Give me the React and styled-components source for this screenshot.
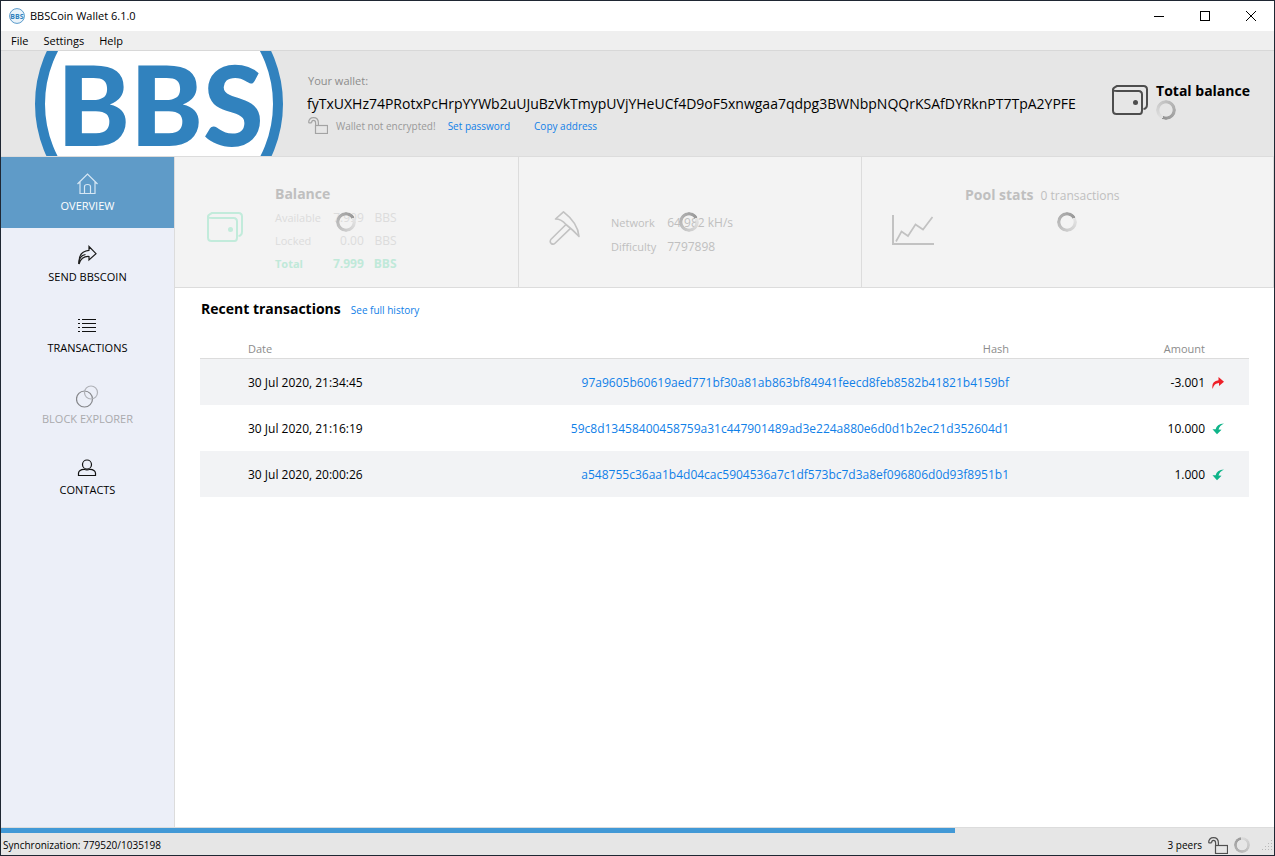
import React from "react";
import styled, { createGlobalStyle } from "styled-components";

const GlobalStyle = createGlobalStyle`
  * { box-sizing: border-box; }
  body {
    margin: 0;
    font-family: "Open Sans", "Noto Sans", sans-serif;
    font-size: 12px;
    line-height: 16px;
    color: #000;
  }
  button {
    border: 0;
    padding: 0;
    background: none;
    font: inherit;
    color: inherit;
  }
  svg { display: block; flex: none; }
`;

const Window = styled.div`
  display: flex;
  flex-direction: column;
  min-height: 100vh;
  border: 1px solid #1f2733;
  background: #fff;
`;

const TitleBar = styled.header`
  display: flex;
  align-items: center;
  height: 30px;
  padding-left: 8px;
`;

const WindowTitle = styled.span`
  flex: 1;
  margin-left: 5px;
  font-size: 11px;
`;

const WindowButton = styled.button`
  display: grid;
  place-items: center;
  width: 46px;
  height: 30px;
`;

const MenuBar = styled.nav`
  display: flex;
  gap: 15px;
  height: 20px;
  padding-left: 10px;
  border-bottom: 1px solid #d8d8d8;
  background: #efefef;
  font-size: 11px;
`;

const Header = styled.section`
  display: flex;
  height: 106px;
  padding: 0 24px 0 34px;
  border-bottom: 1px solid #dcdcdc;
  background: #e6e6e6;
`;

const WalletInfo = styled.div`
  flex: 1;
  min-width: 0;
  padding-top: 22px;
  margin: 0 34px 0 24px;
`;

const Caption = styled.div`
  padding-left: 1px;
  font-size: 11px;
  color: #8c8c8c;
`;

const Address = styled.div`
  overflow: hidden;
  margin: 5px 0 3px;
  font-size: 14px;
  line-height: 20px;
  white-space: nowrap;
`;

const WalletActions = styled.div`
  display: flex;
  align-items: center;
  padding-left: 1px;
  font-size: 10px;
  color: #999;
`;

const Note = styled.span`
  margin: 0 12px 0 8px;
`;

const Link = styled.a`
  color: #1080e8;
  font-size: ${(p) => p.$size || 10}px;
  text-decoration: none;
`;

const PasswordLink = styled(Link)`
  margin-right: 24px;
`;

const TotalBalance = styled.div`
  display: flex;
  gap: 8px;
  padding-top: 32px;
`;

const WalletSlot = styled.div`
  padding-top: 2px;
`;

const BalanceTitle = styled.div`
  margin-bottom: 1px;
  font-size: 14px;
  font-weight: 700;
`;

const Spinner = styled.div`
  width: ${(p) => p.$size}px;
  height: ${(p) => p.$size}px;
  border-radius: 50%;
  background: conic-gradient(from ${(p) => p.$from}deg, ${(p) => p.$tail}, ${(p) => p.$head});
  mask: radial-gradient(closest-side, transparent 62%, #000 70%);
`;

const Body = styled.div`
  display: flex;
  flex: 1;
`;

const Sidebar = styled.nav`
  width: 174px;
  border-right: 1px solid #dcdcdc;
  background: #eceff8;
`;

const NavItem = styled.button`
  display: flex;
  flex-direction: column;
  align-items: center;
  gap: 3px;
  width: 100%;
  height: 71px;
  padding-top: 14px;
  font-size: 11px;
  color: ${(p) => (p.$active ? "#fff" : p.disabled ? "#aaaaad" : "#000")};
  background: ${(p) => (p.$active ? "#5f9bc8" : "transparent")};
`;

const Main = styled.main`
  flex: 1;
  min-width: 0;
`;

const Cards = styled.div`
  display: grid;
  grid-template-columns: 344fr 343fr 412fr;
  height: 131px;
  border-bottom: 1px solid #dcdcdc;
  background: #f3f3f3;
`;

const Card = styled.section`
  position: relative;
  display: flex;
  gap: ${(p) => p.$gap}px;
  padding-left: ${(p) => p.$inset}px;
  border-right: 1px solid #dcdcdc;
  color: #bfbfbf;
`;

const CardIcon = styled.div`
  display: flex;
  align-items: center;
  padding-top: ${(p) => p.$top}px;
`;

const CardBody = styled.div`
  padding-top: ${(p) => p.$top}px;
`;

const PoolHeading = styled.div`
  display: flex;
  flex: 1;
  gap: 7px;
  align-items: baseline;
  padding: 29px 0 0 31px;
`;

const CardTitle = styled.h2`
  margin: 0 0 3px;
  font-size: 14px;
  line-height: 18px;
`;

const CardSpinner = styled(Spinner)`
  position: absolute;
  top: calc(50% - 10px);
  left: calc(50% - 11px);
`;

const StatTable = styled.table`
  border-collapse: collapse;
  font-size: 12px;
`;

const StatRow = styled.tr`
  height: ${(p) => p.$height || 23}px;
  color: ${(p) => p.$color};
  font-weight: ${(p) => (p.$bold ? 700 : 400)};
`;

const StatLabel = styled.th`
  padding: 0;
  font-size: 11px;
  font-weight: inherit;
  text-align: left;
`;

const StatCell = styled.td`
  padding: 0 0 0 ${(p) => p.$pad}px;
  text-align: right;
`;

const StatText = styled(StatCell)`
  text-align: left;
`;

const Recent = styled.section`
  padding: 12px 25px;
`;

const RecentHeading = styled.div`
  display: flex;
  gap: 10px;
  align-items: baseline;
  padding-left: 1px;
`;

const RecentTitle = styled.h1`
  margin: 0;
  font-size: 14px;
  line-height: 18px;
`;

const Transactions = styled.table`
  width: 100%;
  margin-top: 23px;
  border-collapse: separate;
  border-spacing: 0;
`;

const HeadCell = styled.th`
  height: 18px;
  padding: 0 0 1px ${(p) => p.$pad || 0}px;
  border-bottom: 1px solid #dcdcdc;
  font-size: 11px;
  line-height: 16px;
  font-weight: 400;
  color: #8c8c8c;
  text-align: ${(p) => p.$align || "left"};
`;

const Row = styled.tr`
  height: 46px;
  &:nth-child(odd) { background: #f2f3f5; }
`;

const Cell = styled.td`
  padding: 2px 0 0 ${(p) => p.$pad || 0}px;
  text-align: ${(p) => p.$align || "left"};
`;

const ProgressTrack = styled.div`
  height: 6px;
  border-top: 1px solid #dcdcdc;
  background: #e6e6e6;
`;

const ProgressFill = styled.div`
  height: 5px;
  background: #4299d6;
`;

const StatusBar = styled.footer`
  display: flex;
  align-items: center;
  height: 22px;
  padding: 2px 1px 0 2px;
  background: #e6e6e6;
  font-size: 10px;
`;

const SyncText = styled.span`
  flex: 1;
`;

const StatusSpinner = styled.div`
  margin: 0 12px 0 6px;
`;

const PeersText = styled.span`
  margin-right: 6px;
`;

function LogoArt() {
  return (
    <svg width="248" height="105" viewBox="0 0 248 105" role="img" aria-label="BBSCoin">
      <circle cx="124" cy="53" r="119" fill="#fff" stroke="#3182be" strokeWidth="10" />
      <text x="22" y="95" fontFamily="Lato" fontWeight="900" fontSize="110" fill="#3182be">BBS</text>
    </svg>
  );
}

function AppIcon() {
  return (
    <svg width="16" height="16" viewBox="0 0 16 16">
      <circle cx="8" cy="8" r="7.4" fill="#eaf3fa" stroke="#5b9bcb" strokeWidth="1" />
      <text x="8" y="10.5" textAnchor="middle" fontFamily="Open Sans" fontWeight="700" fontSize="7" fill="#3182be">BBS</text>
    </svg>
  );
}

function WalletIcon({ color }) {
  return (
    <svg width="36" height="30" viewBox="0 0 36 30" fill="none" stroke={color} strokeWidth="2">
      <path d="M1 4.500V25.500q0 3.500 3.500 3.500h23q2.500 0 2.500-3.500v-16q0-3.500-3.500-3.500H5Q1 6 1 4.500T5 1h26.500Q35 1 35 4.500v15q0 4-3.500 4.500" />
      <circle cx="23.500" cy="17.500" r="2.500" fill={color} stroke="none" />
    </svg>
  );
}

function LockIcon({ color }) {
  return (
    <svg width="20" height="17" viewBox="0 0 20 17" fill="none" stroke={color}>
      <rect x="7.500" y="8.500" width="12" height="8" strokeWidth="1.200" />
      <path d="M.6 5.800Q.8.700 5.500.700 10.400.700 10.400 6v2.500M3.600 5.800Q3.600 3.400 5.500 3.400 7.600 3.400 7.600 6v2.500M.6 5.800h3" strokeWidth="1.200" />
    </svg>
  );
}

function HomeIcon() {
  return (
    <svg width="22" height="24" viewBox="1 0 22 24" fill="none" stroke="#d6e7f4" strokeWidth="1.200">
      <path d="M1.500 13 11.500 3 21.500 13M4 11v11.500h4.500v-7q0-2 3-2t3 2v7H19V11M8.500 22.500h6" />
    </svg>
  );
}

function SendIcon() {
  return (
    <svg width="22" height="24" viewBox="1 0 22 24" fill="none" stroke="#1c1c1c" strokeWidth="1.200">
      <path d="M13 4.500 20 11.700 13 18V14.500Q5.500 14 3 22 2 9.500 13 8.300Z" />
      <path d="M2.800 22Q3 13.500 9.500 12.500" />
    </svg>
  );
}

function ListIcon() {
  return (
    <svg width="22" height="24" viewBox="1 0 22 24" stroke="#111" strokeWidth="1" shapeRendering="crispEdges">
      <path d="M2 6.500h2M6 6.500h14M2 10.500h2M6 10.500h14M2 14.500h2M6 14.500h14M2 18.500h2M6 18.500h14" />
    </svg>
  );
}

function BlocksIcon() {
  return (
    <svg width="24" height="24" viewBox="1 0 24 24" fill="none" strokeWidth="1.200">
      <circle cx="9.500" cy="15" r="8" stroke="#85868a" />
      <circle cx="16" cy="8.500" r="6.500" stroke="#b0b2b8" />
    </svg>
  );
}

function ContactIcon() {
  return (
    <svg width="22" height="24" viewBox="1 0 22 24" fill="none" stroke="#111" strokeWidth="1.200">
      <circle cx="11" cy="9.500" r="4.500" />
      <path d="M2.500 20.500V18q.5-3.500 5.500-3.700 3 1.200 6 0 5 .2 5.500 3.700v2.500z" />
    </svg>
  );
}

function PickIcon() {
  return (
    <svg width="32" height="36" viewBox="0 0 32 36" fill="none" stroke="#c2c2c2" strokeWidth="1.600" strokeLinejoin="round">
      <path d="M14.500 1.800 6.500 9Q12.500 9 17 14.500 24 20 30 26.500 29 13 14.500 1.800Z" />
      <path d="M17 14.500 1.800 29.500Q.5 32 2.200 33.500 4.200 35 6 33.200L21.500 18.300" />
    </svg>
  );
}

function ChartIcon() {
  return (
    <svg width="42" height="30" viewBox="0 0 42 30" fill="none" stroke="#c2c2c2">
      <path d="M1 0v29h41" strokeWidth="2" />
      <path d="M4 26.500 9.500 16.500 16 21 23.500 9.500 31 14.500 40.500 2" strokeWidth="1.700" />
    </svg>
  );
}

function SentIcon() {
  return (
    <svg width="12" height="12" viewBox="0 0 12 12" fill="#ee2028">
      <path d="M6.500 0 12 4.700 7 9V6Q2 6 .6 12-1 4 6.500 3.200Z" />
    </svg>
  );
}

function ReceivedIcon() {
  return (
    <svg width="12" height="12" viewBox="0 0 12 12" fill="#0fb489">
      <path d="M12 .5Q7.500 2.500 6.500 6.500L9.500 6.800 5 11.300.5 6.200H3.700Q4.500 1 12 .5Z" />
    </svg>
  );
}

function SizeGrip() {
  return (
    <svg width="11" height="11" viewBox="0 0 11 11" fill="#b8b8b8" shapeRendering="crispEdges">
      <path d="M9 0h1v1h-1zM6 3h1v1h-1zM9 3h1v1h-1zM3 6h1v1h-1zM6 6h1v1h-1zM9 6h1v1h-1zM0 9h1v1h-1zM3 9h1v1h-1zM6 9h1v1h-1zM9 9h1v1h-1z" />
    </svg>
  );
}

const navItems = [
  { label: "OVERVIEW", Icon: HomeIcon, active: true },
  { label: "SEND BBSCOIN", Icon: SendIcon },
  { label: "TRANSACTIONS", Icon: ListIcon },
  { label: "BLOCK EXPLORER", Icon: BlocksIcon, disabled: true },
  { label: "CONTACTS", Icon: ContactIcon },
];

const transactions = [
  { date: "30 Jul 2020, 21:34:45", hash: "97a9605b60619aed771bf30a81ab863bf84941feecd8feb8582b41821b4159bf", amount: "-3.001", sent: true },
  { date: "30 Jul 2020, 21:16:19", hash: "59c8d13458400458759a31c447901489ad3e224a880e6d0d1b2ec21d352604d1", amount: "10.000" },
  { date: "30 Jul 2020, 20:00:26", hash: "a548755c36aa1b4d04cac5904536a7c1df573bc7d3a8ef096806d0d93f8951b1", amount: "1.000" },
];

const synced = 779520;
const height = 1035198;

export default function App() {
  return (
    <Window>
      <GlobalStyle />
      <TitleBar>
        <AppIcon />
        <WindowTitle>BBSCoin Wallet 6.1.0</WindowTitle>
        <WindowButton aria-label="Minimize">
          <svg width="10" height="10" stroke="#000" shapeRendering="crispEdges"><path d="M0 5.500h10" /></svg>
        </WindowButton>
        <WindowButton aria-label="Maximize">
          <svg width="10" height="10" fill="none" stroke="#000" shapeRendering="crispEdges"><path d="M.5.5h9v9h-9z" /></svg>
        </WindowButton>
        <WindowButton aria-label="Close">
          <svg width="10" height="10" stroke="#000"><path d="M0 0l10 10M10 0L0 10" /></svg>
        </WindowButton>
      </TitleBar>
      <MenuBar>
        <button>File</button>
        <button>Settings</button>
        <button>Help</button>
      </MenuBar>
      <Header>
        <LogoArt />
        <WalletInfo>
          <Caption>Your wallet:</Caption>
          <Address>fyTxUXHz74PRotxPcHrpYYWb2uUJuBzVkTmypUVjYHeUCf4D9oF5xnwgaa7qdpg3BWNbpNQQrKSAfDYRknPT7TpA2YPFE</Address>
          <WalletActions>
            <LockIcon color="#a3a3a3" />
            <Note>Wallet not encrypted!</Note>
            <PasswordLink href="#password">Set password</PasswordLink>
            <Link href="#copy">Copy address</Link>
          </WalletActions>
        </WalletInfo>
        <TotalBalance>
          <WalletSlot><WalletIcon color="#4d4d4d" /></WalletSlot>
          <div>
            <BalanceTitle>Total balance</BalanceTitle>
            <Spinner $size={20} $from={205} $tail="#e2e2e2" $head="#929292" />
          </div>
        </TotalBalance>
      </Header>
      <Body>
        <Sidebar>
          {navItems.map(({ label, Icon, active, disabled }) => (
            <NavItem key={label} $active={active} disabled={disabled}>
              <Icon />
              {label}
            </NavItem>
          ))}
        </Sidebar>
        <Main>
          <Cards>
            <Card $inset={32} $gap={32}>
              <CardIcon $top={10}><WalletIcon color="#c2ebdb" /></CardIcon>
              <CardBody $top={28}>
                <CardTitle>Balance</CardTitle>
                <StatTable>
                  <tbody>
                    <StatRow $color="#dcdcdc">
                      <StatLabel scope="row">Available</StatLabel>
                      <StatCell $pad={12}>7.999</StatCell>
                      <StatCell $pad={10}>BBS</StatCell>
                    </StatRow>
                    <StatRow $color="#dcdcdc">
                      <StatLabel scope="row">Locked</StatLabel>
                      <StatCell $pad={12}>0.00</StatCell>
                      <StatCell $pad={10}>BBS</StatCell>
                    </StatRow>
                    <StatRow $color="#c0e9d9" $bold>
                      <StatLabel scope="row">Total</StatLabel>
                      <StatCell $pad={12}>7.999</StatCell>
                      <StatCell $pad={10}>BBS</StatCell>
                    </StatRow>
                  </tbody>
                </StatTable>
              </CardBody>
              <CardSpinner $size={20} $from={60} $tail="#e6e6e6" $head="#989898" />
            </Card>
            <Card $inset={30} $gap={30}>
              <CardIcon $top={12}><PickIcon /></CardIcon>
              <CardBody $top={54}>
                <StatTable>
                  <tbody>
                    <StatRow $height={24}>
                      <StatLabel scope="row">Network</StatLabel>
                      <StatText $pad={11}>64.982 kH/s</StatText>
                    </StatRow>
                    <StatRow $height={24}>
                      <StatLabel scope="row">Difficulty</StatLabel>
                      <StatText $pad={11}>7797898</StatText>
                    </StatRow>
                  </tbody>
                </StatTable>
              </CardBody>
              <CardSpinner $size={20} $from={60} $tail="#e6e6e6" $head="#989898" />
            </Card>
            <Card $inset={30} $gap={0}>
              <CardIcon $top={16}><ChartIcon /></CardIcon>
              <PoolHeading>
                <CardTitle>Pool stats</CardTitle>
                <span>0 transactions</span>
              </PoolHeading>
              <CardSpinner $size={20} $from={60} $tail="#e6e6e6" $head="#989898" />
            </Card>
          </Cards>
          <Recent>
            <RecentHeading>
              <RecentTitle>Recent transactions</RecentTitle>
              <Link href="#history">See full history</Link>
            </RecentHeading>
            <Transactions>
              <thead>
                <tr>
                  <HeadCell $pad={48}>Date</HeadCell>
                  <HeadCell $align="right">Hash</HeadCell>
                  <HeadCell $align="right">Amount</HeadCell>
                  <HeadCell aria-label="Direction" />
                </tr>
              </thead>
              <tbody>
                {transactions.map((t) => (
                  <Row key={t.hash}>
                    <Cell $pad={48}>{t.date}</Cell>
                    <Cell $align="right"><Link $size={12} href={"#" + t.hash}>{t.hash}</Link></Cell>
                    <Cell $align="right" width="196">{t.amount}</Cell>
                    <Cell $pad={7} width="44">{t.sent ? <SentIcon /> : <ReceivedIcon />}</Cell>
                  </Row>
                ))}
              </tbody>
            </Transactions>
          </Recent>
        </Main>
      </Body>
      <ProgressTrack role="progressbar" aria-valuenow={synced} aria-valuemax={height}>
        <ProgressFill style={{ width: `${(synced / height) * 99.5}%` }} />
      </ProgressTrack>
      <StatusBar>
        <SyncText>Synchronization: {synced}/{height}</SyncText>
        <PeersText>3 peers</PeersText>
        <LockIcon color="#505050" />
        <StatusSpinner><Spinner $size={16} $from={350} $tail="#dcdcdc" $head="#9a9a9a" /></StatusSpinner>
        <SizeGrip />
      </StatusBar>
    </Window>
  );
}
